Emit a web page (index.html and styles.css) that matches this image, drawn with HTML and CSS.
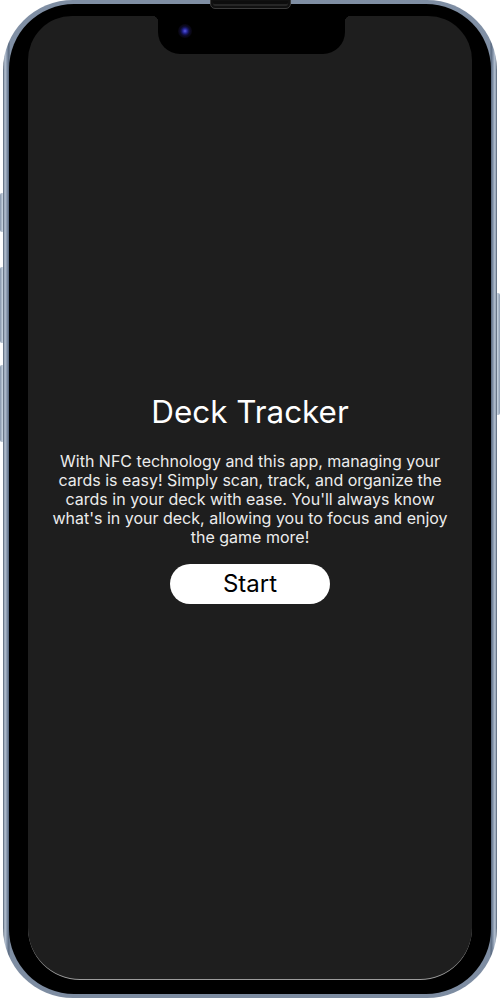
FILE: index.html
```html
<!DOCTYPE html>
<html lang="en">
<head>
<meta charset="utf-8">
<title>Deck Tracker</title>
<link rel="stylesheet" href="styles.css">
</head>
<body>
<div class="stage">
  <div class="side-btn l1"></div>
  <div class="side-btn l2"></div>
  <div class="side-btn l3"></div>
  <div class="side-btn r1"></div>
  <div class="device">
    <div class="bezel">
      <div class="screen">
        <h1 class="title">Deck Tracker</h1>
        <p class="intro">With NFC technology and this app, managing your cards is easy! Simply scan, track, and organize the cards in your deck with ease. You'll always know what's in your deck, allowing you to focus and enjoy the game more!</p>
        <button class="start">Start</button>
      </div>
    </div>
    <div class="notch"><span class="camera"></span></div>
    <div class="speaker"></div>
  </div>
</div>
</body>
</html>
```

FILE: styles.css
```css
html, body {
  margin: 0;
  padding: 0;
  background: #ffffff;
}
.stage {
  position: relative;
  width: 500px;
  height: 1000px;
  overflow: hidden;
}
.device {
  position: absolute;
  left: 3px;
  top: 0;
  width: 494px;
  height: 998px;
  box-sizing: border-box;
  padding: 4px 6px 4px 6px;
  border-radius: 70px;
  background:
    linear-gradient(90deg, #4f5d70 0px, #b8c5d5 2px, #8493a8 4px, #56667c 6px, rgba(0,0,0,0) 7px, rgba(0,0,0,0) 487px, #56667c 488px, #8493a8 490px, #b8c5d5 492px, #4f5d70 494px),
    linear-gradient(180deg, #7f8ea3, #92a1b5 50%, #7d8ca1);
}
.bezel {
  height: 100%;
  box-sizing: border-box;
  background: #000;
  border-radius: 65px;
  padding: 12px 19px 14px 19px;
}
.screen {
  height: 100%;
  box-sizing: border-box;
  background: #1e1e1e;
  border-radius: 44px 44px 52px 52px;
  border-bottom: 1px solid #9c9c9c;
  display: flex;
  flex-direction: column;
  align-items: center;
  justify-content: center;
  padding: 0 20px;
  font-family: Inter, "Noto Sans", sans-serif;
  color: #ffffff;
}
.title {
  margin: 0 0 20px 0;
  font-size: 31.4px;
  font-weight: 400;
  line-height: 40px;
}
.intro {
  margin: 0 0 17px 0;
  width: 400px;
  font-size: 16px;
  line-height: 19px;
  text-align: center;
  color: #ececec;
}
.start {
  width: 160px;
  height: 40px;
  border: none;
  border-radius: 20px;
  background: #ffffff;
  color: #000;
  font-family: Inter, "Noto Sans", sans-serif;
  font-size: 24px;
  padding: 0;
}
.notch {
  position: absolute;
  left: 155px;
  top: 10px;
  width: 187px;
  height: 44px;
  background: #000;
  border-radius: 0 0 22px 22px;
}
.notch::before,
.notch::after {
  content: "";
  position: absolute;
  top: 6px;
  width: 6px;
  height: 6px;
}
.notch::before {
  left: -6px;
  background: radial-gradient(circle at 0 100%, rgba(0,0,0,0) 6px, #000 6.5px);
}
.notch::after {
  right: -6px;
  background: radial-gradient(circle at 100% 100%, rgba(0,0,0,0) 6px, #000 6.5px);
}
.camera {
  position: absolute;
  left: 20px;
  top: 14px;
  width: 14px;
  height: 14px;
  border-radius: 50%;
  background: radial-gradient(circle at 50% 50%, #5a5ae0 0, #2a2aa0 2px, #15155a 3.5px, #0c0a24 5px, #07050f 7px);
}
.speaker {
  position: absolute;
  left: 207px;
  top: -2px;
  width: 81px;
  height: 11px;
  box-sizing: border-box;
  border: 1px solid #3c3c3c;
  border-radius: 0 0 5px 5px;
  background: #0d0d0d;
  box-shadow: inset 0 0 0 2px #111, inset 0 -3px 0 1px #262626;
}
.side-btn {
  position: absolute;
  width: 5px;
  border-radius: 2px;
  background: linear-gradient(90deg, #8595aa, #c3cfdc, #8b9bb0);
}
.l1 { left: 0; top: 193px; height: 39px; }
.l2 { left: 0; top: 267px; height: 76px; }
.l3 { left: 0; top: 365px; height: 77px; }
.r1 { right: 0; top: 293px; height: 122px; }
```
